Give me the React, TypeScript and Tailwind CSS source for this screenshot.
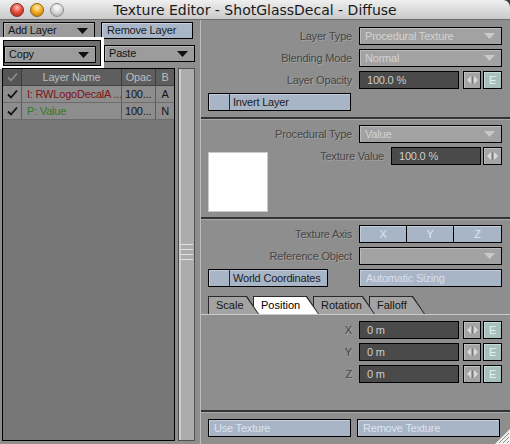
import React from "react";

function DownArrow({ light }: { light?: boolean }) {
  return (
    <svg width="11" height="6" viewBox="0 0 11 6">
      <path d="M0 0H11L5.5 6Z" fill={light ? "#cacaca" : "#111"} />
    </svg>
  );
}

function Spinner({ w }: { w: "a" | "b" }) {
  return (
    <div
      className={`${w === "a" ? "w-[18px]" : "w-[19px]"} h-[18px] border border-black bg-[#a4a4a4] shadow-[inset_1px_1px_0_#bebebe] flex items-center justify-center`}
    >
      <svg width="11" height="8" viewBox="0 0 11 8">
        <path d="M0 4L4 0V8Z M11 4L7 0V8Z" fill="#dadada" />
        <line x1="5.5" y1="0" x2="5.5" y2="8" stroke="#7c7c7c" />
      </svg>
    </div>
  );
}

function EBtn() {
  return (
    <div className="w-[19px] h-[18px] border border-black bg-[#a8c1bd] shadow-[inset_1px_1px_0_#c6dad7] text-[#e9f1f0] flex items-center justify-center">
      E
    </div>
  );
}

function Dropdown({ value }: { value: string }) {
  return (
    <div className="w-[143px] h-[18px] border border-black bg-[#a2a2a2] shadow-[inset_1px_1px_0_#bbbbbb] flex items-center justify-between pl-[5px] pr-[6px] text-[#d3d3d3]">
      <span>{value}</span>
      <DownArrow light />
    </div>
  );
}

function Label({ children }: { children: React.ReactNode }) {
  return <div className="w-[151px] text-right text-[#464646] [text-shadow:1px_1px_0_#a4a4a4]">{children}</div>;
}

function Row({ label, children }: { label: string; children: React.ReactNode }) {
  return (
    <div className="flex items-center h-[18px]">
      <Label>{label}</Label>
      <div className="ml-[7px] flex">{children}</div>
    </div>
  );
}

function DarkInput({ value, wide }: { value: string; wide?: boolean }) {
  return (
    <div
      className={`${wide ? "w-[100px]" : "w-[90px]"} h-[18px] border border-black bg-[#4a4a4a] text-[#cdcdcd] flex items-center pl-[7px]`}
    >
      {value}
    </div>
  );
}

function NumRow({ label, value }: { label: string; value: string }) {
  return (
    <Row label={label}>
      <DarkInput value={value} wide />
      <div className="ml-[4px]">
        <Spinner w="a" />
      </div>
      <div className="ml-[2px]">
        <EBtn />
      </div>
    </Row>
  );
}

function CheckBtn({ label, wide }: { label: string; wide?: boolean }) {
  return (
    <div
      className={`${wide ? "w-[143px]" : "w-[120px]"} h-[18px] border border-black bg-[#a8b5c7] shadow-[inset_1px_1px_0_#c2ccda] flex items-center text-[#202020]`}
    >
      <div className="w-[21px] h-full border-r border-[#2a2a2a]" />
      <span className="pl-[3px]">{label}</span>
    </div>
  );
}

function Tab({ label, cls, active }: { label: string; cls: string; active?: boolean }) {
  return (
    <div
      className={`relative h-[18px] bg-[#2a2a2a] pt-[1px] pl-[1px] [clip-path:polygon(0_0,calc(100%_-_12px)_0,100%_100%,0_100%)] ${cls}`}
    >
      <div
        className={`h-full flex items-center pl-[7px] [clip-path:polygon(0_0,calc(100%_-_13px)_0,calc(100%_-_1px)_100%,0_100%)] ${
          active ? "bg-white text-black" : "bg-[#a3a3a3] text-[#151515]"
        }`}
      >
        {label}
      </div>
    </div>
  );
}

function Check({ faded }: { faded?: boolean }) {
  return (
    <svg width="11" height="10" viewBox="0 0 11 10">
      <path d="M1 5.5L4 8.5L10 1.5" fill="none" stroke={faded ? "#8a8a8a" : "#111"} strokeWidth="1.8" />
    </svg>
  );
}

function Divider() {
  return <div className="h-[3px] bg-[#343434] border-b border-[#a9a9a9]" />;
}

function Light({ c }: { c: "r" | "y" | "g" }) {
  const cls =
    c === "r"
      ? "bg-[radial-gradient(circle_at_50%_30%,#ffc4b8_0%,#e8503c_45%,#a0200f_100%)] border-[#7d2a1e]"
      : c === "y"
      ? "bg-[radial-gradient(circle_at_50%_30%,#fff0b8_0%,#f4b02a_45%,#b06a00_100%)] border-[#8f6414]"
      : "bg-[radial-gradient(circle_at_50%_30%,#ffffff_0%,#d6d6d6_50%,#9a9a9a_100%)] border-[#8c8c8c]";
  return <div className={`w-[14px] h-[14px] rounded-full border ${cls}`} />;
}

export default function App() {
  return (
    <div className="relative w-[510px] h-[444px] overflow-hidden bg-[#3c3c3c] font-['Liberation_Sans',Arial,sans-serif] text-[11px] leading-none tracking-[-0.2px]">
      {/* Title bar */}
      <div className="h-[20px] flex items-center rounded-tr-[7px] bg-gradient-to-b from-[#efefef] to-[#cacaca] border-b border-[#6c6c6c]">
        <div className="w-[70px] flex gap-[6px] pl-[10px]">
          <Light c="r" />
          <Light c="y" />
          <Light c="g" />
        </div>
        <div className="flex-1 text-center text-[14px] text-[#1a1a1a] tracking-normal whitespace-nowrap font-['DejaVu_Sans',sans-serif]">
          Texture Editor - ShotGlassDecal - Diffuse
        </div>
        <div className="w-[70px]" />
      </div>

      <div className="flex h-[424px] bg-[#8e8e8e]">
        {/* Left column */}
        <div className="w-[200px] flex flex-col pt-[2px]">
          <div className="flex h-[17px]">
            <div className="ml-[3px] w-[92px] border border-black bg-[#9c9c9c] shadow-[inset_1px_1px_0_#b8b8b8] flex items-center justify-between pl-[4px] pr-[6px] text-[#151515]">
              <span>Add Layer</span>
              <DownArrow />
            </div>
            <div className="ml-[6px] w-[92px] border border-black bg-[#a9b6c8] shadow-[inset_1px_1px_0_#c4cedc] flex items-center pl-[5px] text-[#1c1c1c]">
              Remove Layer
            </div>
          </div>
          <div className="flex h-[32px] -mt-[2px]">
            <div className="w-[104px] h-[32px] border-[3px] border-white">
              <div className="h-full border border-black bg-[#6e6e6e] pt-[5px]">
                <div className="w-[92px] h-[17px] border border-black bg-[#9c9c9c] shadow-[inset_1px_1px_0_#b8b8b8] flex items-center justify-between pl-[4px] pr-[6px] text-[#151515]">
                  <span>Copy</span>
                  <DownArrow />
                </div>
              </div>
            </div>
            <div className="mt-[8px] h-[17px] w-[91px] border border-black bg-[#9c9c9c] shadow-[inset_1px_1px_0_#b8b8b8] flex items-center justify-between pl-[4px] pr-[6px] text-[#151515]">
              <span>Paste</span>
              <DownArrow />
            </div>
          </div>
          <div className="flex flex-1 pb-[3px] -mt-[1px]">
            <div className="ml-[2px] w-[173px] border border-black bg-[#777777] flex flex-col">
              <div className="flex h-[17px] bg-[#5e5e5e] text-[#bdbdbd] border-b border-[#444]">
                <div className="w-[19px] flex items-center justify-center border-r border-[#3c3c3c] bg-[#555]">
                  <Check faded />
                </div>
                <div className="w-[100px] flex items-center justify-center border-r border-[#3c3c3c]">Layer Name</div>
                <div className="w-[34px] flex items-center justify-center border-r border-[#3c3c3c]">Opac</div>
                <div className="flex-1 flex items-center justify-center">B</div>
              </div>
              {[
                { name: "I: RWLogoDecalA ...", col: "text-[#7e1414]", b: "A" },
                { name: "P: Value", col: "text-[#2a7d2a]", b: "N" },
              ].map((r) => (
                <div key={r.name} className="flex h-[17px] bg-[#8d8d8d] border-b border-[#6c6c6c] text-[#141414]">
                  <div className="w-[19px] flex items-center justify-center border-r border-[#5c5c5c]">
                    <Check />
                  </div>
                  <div className={`w-[100px] flex items-center pl-[5px] border-r border-[#5c5c5c] whitespace-nowrap overflow-hidden ${r.col}`}>
                    {r.name}
                  </div>
                  <div className="w-[34px] flex items-center pl-[3px] border-r border-[#5c5c5c]">100...</div>
                  <div className="flex-1 flex items-center justify-center">{r.b}</div>
                </div>
              ))}
            </div>
            <div className="ml-[3px] w-[17px] border border-[#505050] bg-[#acacac] shadow-[inset_2px_0_0_#cfcfcf] flex flex-col items-center justify-center">
              <div className="flex flex-col gap-[4px] w-[13px] -mt-[6px]">
                <div className="h-[1px] bg-[#e2e2e2]" />
                <div className="h-[1px] bg-[#e2e2e2]" />
                <div className="h-[1px] bg-[#e2e2e2]" />
                <div className="h-[1px] bg-[#e2e2e2]" />
              </div>
            </div>
          </div>
        </div>

        {/* Right column */}
        <div className="flex-1 border-l border-[#bdbdbd] flex flex-col">
          {/* Section 1 */}
          <div className="h-[97px] pt-[7px] flex flex-col gap-[4px]">
            <Row label="Layer Type">
              <Dropdown value="Procedural Texture" />
            </Row>
            <Row label="Blending Mode">
              <Dropdown value="Normal" />
            </Row>
            <NumRow label="Layer Opacity" value="100.0 %" />
            <div className="pl-[7px]">
              <CheckBtn label="Invert Layer" wide />
            </div>
          </div>
          <Divider />
          {/* Section 2 */}
          <div className="h-[97px] pt-[5px] flex flex-col">
            <Row label="Procedural Type">
              <Dropdown value="Value" />
            </Row>
            <div className="flex mt-[4px]">
              <div className="ml-[7px] mt-[5px] w-[60px] h-[60px] bg-white border border-[#c9c9c9]" />
              <div className="flex-1 flex items-center justify-end h-[18px] pr-[8px]">
                <div className="text-[#464646] [text-shadow:1px_1px_0_#a4a4a4]">Texture Value</div>
                <div className="ml-[7px]">
                  <DarkInput value="100.0 %" />
                </div>
                <div className="ml-[2px]">
                  <Spinner w="b" />
                </div>
              </div>
            </div>
          </div>
          <Divider />
          {/* Section 3 */}
          <div className="h-[190px] pt-[5px] flex flex-col">
            <Row label="Texture Axis">
              <div className="w-[143px] h-[18px] border border-black bg-[#a8b5c7] shadow-[inset_1px_1px_0_#c2ccda] flex text-[#dfe5ee]">
                <div className="w-[47px] flex items-center justify-center border-r border-black">X</div>
                <div className="w-[47px] flex items-center justify-center border-r border-black">Y</div>
                <div className="flex-1 flex items-center justify-center">Z</div>
              </div>
            </Row>
            <div className="mt-[4px]">
              <Row label="Reference Object">
                <Dropdown value="" />
              </Row>
            </div>
            <div className="mt-[4px] flex h-[18px] pl-[7px] pr-[8px] justify-between">
              <CheckBtn label="World Coordinates" />
              <div className="w-[143px] h-[18px] border border-black bg-[#a8b5c7] shadow-[inset_1px_1px_0_#c2ccda] flex items-center pl-[6px] text-[#d8dfe9]">
                Automatic Sizing
              </div>
            </div>
            <div className="mt-[9px] flex pl-[7px] border-b border-[#cbcbcb] text-[11px] tracking-normal">
              <Tab label="Scale" cls="w-[51px] z-40" />
              <Tab label="Position" cls="w-[66px] -ml-[6px] z-30" active />
              <Tab label="Rotation" cls="w-[62px] -ml-[6px] z-20" />
              <Tab label="Falloff" cls="w-[56px] -ml-[6px] z-10" />
            </div>
            <div className="mt-[6px] flex flex-col gap-[4px]">
              <NumRow label="X" value="0 m" />
              <NumRow label="Y" value="0 m" />
              <NumRow label="Z" value="0 m" />
            </div>
          </div>
          <Divider />
          {/* Bottom */}
          <div className="flex-1 flex pt-[6px] pl-[7px]">
            <div className="w-[143px] h-[18px] border border-black bg-[#a8b5c7] shadow-[inset_1px_1px_0_#c2ccda] flex items-center pl-[5px] text-[#dde3ec]">
              Use Texture
            </div>
            <div className="ml-[6px] w-[143px] h-[18px] border border-black bg-[#a8b5c7] shadow-[inset_1px_1px_0_#c2ccda] flex items-center pl-[5px] text-[#dde3ec]">
              Remove Texture
            </div>
          </div>
        </div>
      </div>

      {/* Resize grip */}
      <div className="absolute right-0 bottom-0 w-[15px] h-[15px]">
        <svg width="15" height="15" viewBox="0 0 15 15">
          <path d="M15 0V15H0Z" fill="#f2f2f2" />
          <path d="M4 14L14 4M8 14L14 8M12 14L14 12" stroke="#8a8a8a" strokeWidth="1" />
        </svg>
      </div>
    </div>
  );
}
